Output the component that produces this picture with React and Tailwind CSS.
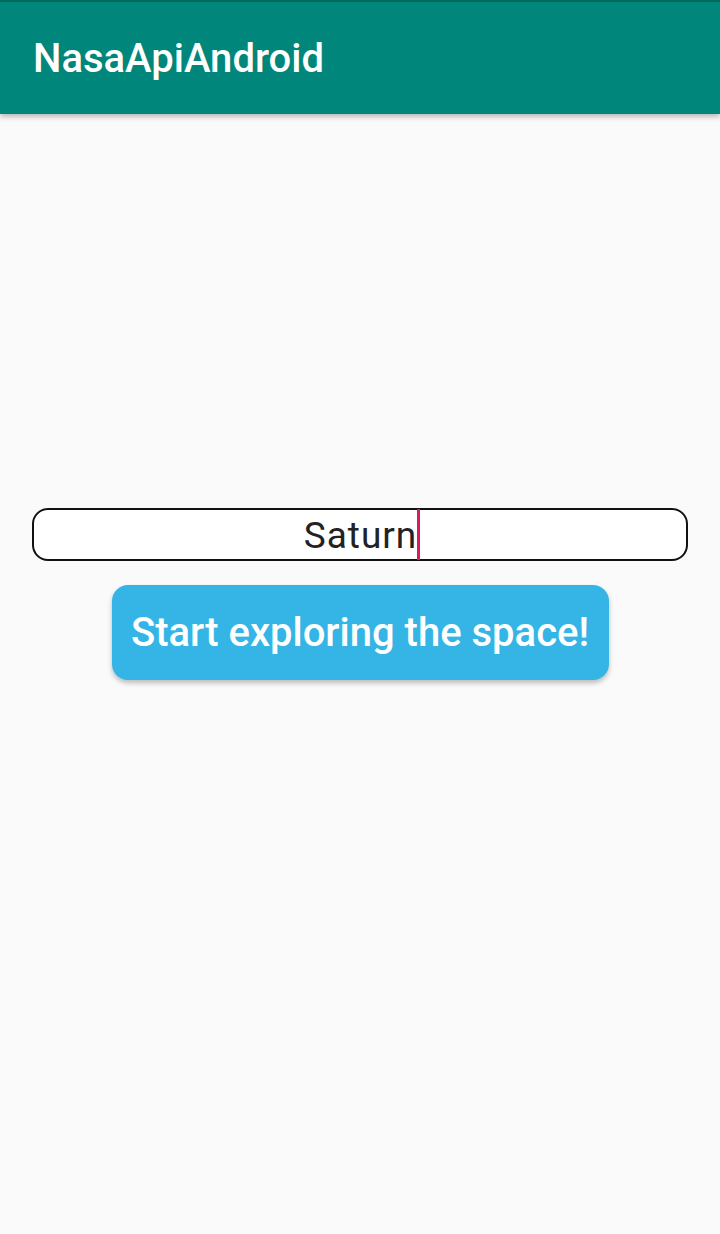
export default function App() {
  return (
    <div className="min-h-[1234px] w-[720px] bg-[#fafafa] flex flex-col" style={{ fontFamily: 'Roboto, "Liberation Sans", sans-serif' }}>
      <header className="h-[114px] bg-[#00867a] border-t-2 border-[#006a5f] flex items-center px-[33px] shadow-[0_3px_5px_rgba(0,0,0,0.25)] relative z-10">
        <h1 className="text-white text-[40px] font-medium leading-none mt-[2px]">NasaApiAndroid</h1>
      </header>

      <main className="flex flex-col items-center pt-[394px]">
        <div className="w-[656px] h-[53px] rounded-[16px] border-2 border-[#111] bg-white flex items-center justify-center">
          <span className="text-[37px] tracking-[1px] text-[#222] leading-none pl-[4px] mt-[2px]">Saturn</span>
          <span className="shrink-0 w-[3px] h-[51px] bg-[#d81b60]" />
        </div>

        <button className="mt-[24px] w-[497px] h-[95px] rounded-[16px] bg-[#35b5e5] text-white text-[40px] font-medium leading-none shadow-[0_3px_5px_rgba(0,0,0,0.25)]">
          Start exploring the space!
        </button>
      </main>
    </div>
  )
}
